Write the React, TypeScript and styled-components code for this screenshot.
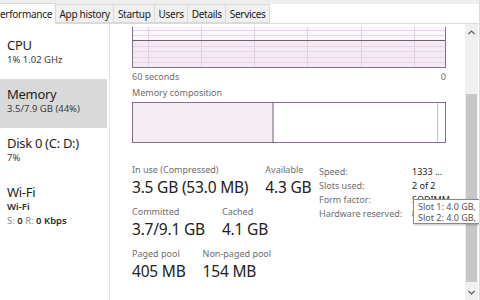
import React from "react";
import styled, { createGlobalStyle } from "styled-components";

const GlobalStyle = createGlobalStyle`
  html, body { margin: 0; padding: 0; background: #ffffff; }
  body {
    width: 480px; height: 300px; overflow: hidden;
    font-family: "Noto Sans", "Open Sans", sans-serif;
    color: #1e1e1e;
  }
`;

const Window = styled.div`
  position: relative;
  width: 480px;
  height: 300px;
  display: flex;
  flex-direction: column;
  background: #ffffff;
  overflow: hidden;
  border-right: 1px solid #e6d9c4;
  box-sizing: border-box;
`;

const TabStrip = styled.div`
  height: 24px;
  flex: none;
  display: flex;
  align-items: flex-end;
  background: linear-gradient(#eeeeee 0, #eeeeee 4px, #ffffff 4px);
  border-bottom: 1px solid #dadada;
  box-sizing: border-box;
`;

const Tab = styled.div<{ $active?: boolean }>`
  height: ${(p) => (p.$active ? "21px" : "19px")};
  margin-bottom: ${(p) => (p.$active ? "-1px" : "0")};
  padding: ${(p) => (p.$active ? "0 3px 0 0" : "0 3.5px")};
  display: flex;
  align-items: center;
  box-sizing: border-box;
  font-size: 10px;
  color: #1a1a1a;
  background: ${(p) => (p.$active ? "#ffffff" : "#f0f0f0")};
  border: 1px solid #d9d9d9;
  border-left: ${(p) => (p.$active ? "none" : "1px solid #d9d9d9")};
  border-bottom: ${(p) => (p.$active ? "none" : "1px solid #d9d9d9")};
  margin-right: -1px;
  letter-spacing: -0.3px;
  white-space: nowrap;
`;

const Body = styled.div`
  flex: 1;
  display: flex;
  min-height: 0;
`;

const Sidebar = styled.div`
  width: 110px;
  flex: none;
  padding-top: 6px;
  border-right: 1px solid #e3e3e3;
  box-sizing: border-box;
`;

const Item = styled.div<{ $selected?: boolean }>`
  width: 107px;
  height: 49px;
  box-sizing: border-box;
  padding: 7px 0 0 7px;
  background: ${(p) => (p.$selected ? "#d9d9d9" : "transparent")};
`;

const ItemTitle = styled.div`
  font-size: 13px;
  line-height: 16px;
  color: #1e1e1e;
  letter-spacing: -0.3px;
  white-space: nowrap;
`;

const ItemSub = styled.div<{ $strong?: boolean }>`
  font-size: 9.5px;
  line-height: 14px;
  color: ${(p) => (p.$strong ? "#2a2a2a" : "#3a3a3a")};
  font-weight: ${(p) => (p.$strong ? 600 : 400)};
  white-space: nowrap;
`;

const Dim = styled.span`
  color: #8a8a8a;
  font-weight: 400;
`;

const Bold = styled.span`
  font-weight: 600;
  color: #2a2a2a;
`;

const Main = styled.div`
  flex: 1;
  display: flex;
  min-width: 0;
`;

const Content = styled.div`
  width: 314px;
  margin-left: 22px;
  padding-top: 3px;
  display: flex;
  flex-direction: column;
`;

const Graph = styled.div`
  height: 41px;
  box-sizing: border-box;
  border: 1px solid #857089;
  border-top: none;
  background: #fbf6fb;
  display: flex;
`;

const AxisRow = styled.div`
  display: flex;
  justify-content: space-between;
  font-size: 9px;
  line-height: 12px;
  color: #6e6e6e;
  margin-top: 3px;
`;

const SectionLabel = styled.div`
  font-size: 9px;
  line-height: 12px;
  color: #6e6e6e;
  margin-top: 4px;
`;

const Composition = styled.div`
  height: 41px;
  margin-top: 3px;
  box-sizing: border-box;
  border: 1px solid #857089;
  display: flex;
`;

const Segment = styled.div<{ $w: number; $fill: string; $edge: string }>`
  width: ${(p) => p.$w}px;
  flex: none;
  background: ${(p) => p.$fill};
  border-right: ${(p) => p.$edge};
`;

const Stats = styled.div`
  display: flex;
  margin-top: 21px;
`;

const StatsLeft = styled.div`
  display: flex;
  flex-direction: column;
  gap: 8px;
  width: 187px;
  flex: none;
`;

const StatRow = styled.div`
  display: flex;
  gap: 17px;
`;

const Stat = styled.div`
  display: flex;
  flex-direction: column;
`;

const StatLabel = styled.div`
  font-size: 9px;
  line-height: 12px;
  color: #6e6e6e;
  white-space: nowrap;
`;

const StatValue = styled.div`
  font-size: 15.5px;
  line-height: 22px;
  color: #222222;
  white-space: nowrap;
  letter-spacing: -0.2px;
`;

const Specs = styled.div`
  position: relative;
  display: grid;
  grid-template-columns: 93px auto;
  grid-auto-rows: 14px;
  align-items: center;
  align-content: start;
  font-size: 9px;
  white-space: nowrap;
`;

const SpecLabel = styled.div`
  color: #6e6e6e;
`;

const SpecValue = styled.div`
  color: #222222;
`;

const Tooltip = styled.div`
  position: absolute;
  left: 94px;
  top: 35px;
  width: 90px;
  height: 25px;
  box-sizing: border-box;
  padding: 1px 0 0 4px;
  background: #ffffff;
  border: 1px solid #8a8a8a;
  box-shadow: 1px 1px 2px rgba(0, 0, 0, 0.25);
  font-size: 9px;
  line-height: 11px;
  color: #555555;
  overflow: hidden;
  z-index: 3;
`;

const Scrollbar = styled.div`
  width: 13px;
  margin-left: auto;
  margin-right: 1px;
  flex: none;
  background: #f0f0f0;
  display: flex;
  flex-direction: column;
  align-items: center;
`;

const Arrow = styled.div`
  height: 16px;
  display: flex;
  align-items: center;
  justify-content: center;
  flex: none;
`;

const Thumb = styled.div`
  width: 11px;
  height: 188px;
  margin-top: 54px;
  background: #c6c6c6;
  flex: none;
`;

const Spacer = styled.div`
  flex: 1;
`;

const Chev = ({ up }: { up?: boolean }) => (
  <svg width="7" height="5" viewBox="0 0 7 5">
    <path
      d={up ? "M0.5 4 L3.5 1 L6.5 4" : "M0.5 1 L3.5 4 L6.5 1"}
      fill="none"
      stroke="#606060"
      strokeWidth="1.2"
    />
  </svg>
);

const GraphSvg = () => {
  const w = 312;
  const h = 40;
  const vx = [15, 68, 121, 174, 228, 281];
  const hy = [3, 8, 19, 24, 30, 35];
  return (
    <svg width={w} height={h} viewBox={`0 0 ${w} ${h}`}>
      <rect x="0" y="14" width={w} height={h - 14} fill="#f4eaf4" />
      {hy.map((y) => (
        <line key={y} x1="0" x2={w} y1={y + 0.5} y2={y + 0.5} stroke="#e6d6e8" strokeWidth="1" />
      ))}
      {vx.map((x) => (
        <line key={x} x1={x + 0.5} x2={x + 0.5} y1="0" y2={h} stroke="#e0cfe3" strokeWidth="1" />
      ))}
      <line x1="0" x2={w} y1="13.5" y2="13.5" stroke="#6f5c78" strokeWidth="1.2" />
    </svg>
  );
};

export default function App() {
  return (
    <>
      <GlobalStyle />
      <Window>
        <TabStrip>
          <Tab $active>erformance</Tab>
          <Tab>App history</Tab>
          <Tab>Startup</Tab>
          <Tab>Users</Tab>
          <Tab>Details</Tab>
          <Tab>Services</Tab>
        </TabStrip>
        <Body>
          <Sidebar>
            <Item>
              <ItemTitle>CPU</ItemTitle>
              <ItemSub>1% 1.02 GHz</ItemSub>
            </Item>
            <Item $selected>
              <ItemTitle>Memory</ItemTitle>
              <ItemSub>3.5/7.9 GB (44%)</ItemSub>
            </Item>
            <Item>
              <ItemTitle>Disk 0 (C: D:)</ItemTitle>
              <ItemSub>7%</ItemSub>
            </Item>
            <Item>
              <ItemTitle>Wi-Fi</ItemTitle>
              <ItemSub $strong>Wi-Fi</ItemSub>
              <ItemSub>
                <Dim>S: </Dim>
                <Bold>0</Bold>
                <Dim> R: </Dim>
                <Bold>0 Kbps</Bold>
              </ItemSub>
            </Item>
          </Sidebar>
          <Main>
            <Content>
              <Graph>
                <GraphSvg />
              </Graph>
              <AxisRow>
                <span>60 seconds</span>
                <span>0</span>
              </AxisRow>
              <SectionLabel>Memory composition</SectionLabel>
              <Composition>
                <Segment $w={139} $fill="#f3edf3" $edge="2px solid #b7a7bb" />
                <Segment $w={163} $fill="#ffffff" $edge="1px solid #c9bfcc" />
              </Composition>
              <Stats>
                <StatsLeft>
                  <StatRow>
                    <Stat>
                      <StatLabel>In use (Compressed)</StatLabel>
                      <StatValue>3.5 GB (53.0 MB)</StatValue>
                    </Stat>
                    <Stat>
                      <StatLabel>Available</StatLabel>
                      <StatValue>4.3 GB</StatValue>
                    </Stat>
                  </StatRow>
                  <StatRow>
                    <Stat>
                      <StatLabel>Committed</StatLabel>
                      <StatValue>3.7/9.1 GB</StatValue>
                    </Stat>
                    <Stat>
                      <StatLabel>Cached</StatLabel>
                      <StatValue>4.1 GB</StatValue>
                    </Stat>
                  </StatRow>
                  <StatRow>
                    <Stat>
                      <StatLabel>Paged pool</StatLabel>
                      <StatValue>405 MB</StatValue>
                    </Stat>
                    <Stat>
                      <StatLabel>Non-paged pool</StatLabel>
                      <StatValue>154 MB</StatValue>
                    </Stat>
                  </StatRow>
                </StatsLeft>
                <Specs>
                  <SpecLabel>Speed:</SpecLabel>
                  <SpecValue>1333 ...</SpecValue>
                  <SpecLabel>Slots used:</SpecLabel>
                  <SpecValue>2 of 2</SpecValue>
                  <SpecLabel>Form factor:</SpecLabel>
                  <SpecValue>SODIMM</SpecValue>
                  <SpecLabel>Hardware reserved:</SpecLabel>
                  <SpecValue>84.1 MB</SpecValue>
                  <Tooltip>
                    <div>Slot 1: 4.0 GB, 1333</div>
                    <div>Slot 2: 4.0 GB, 1333</div>
                  </Tooltip>
                </Specs>
              </Stats>
            </Content>
            <Scrollbar>
              <Arrow><Chev up /></Arrow>
              <Thumb />
              <Spacer />
              <Arrow><Chev /></Arrow>
            </Scrollbar>
          </Main>
        </Body>
      </Window>
    </>
  );
}
